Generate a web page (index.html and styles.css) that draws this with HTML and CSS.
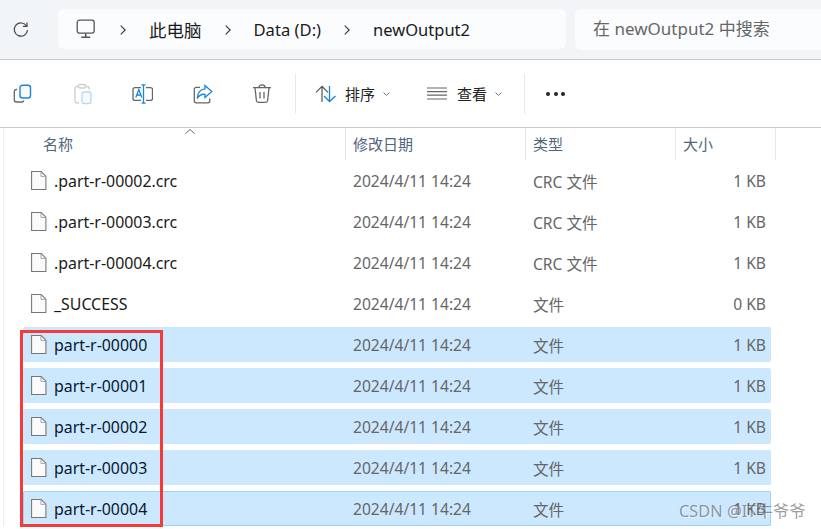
FILE: index.html
```html
<!DOCTYPE html>
<html lang="zh-CN">
<head>
<meta charset="utf-8">
<title>newOutput2</title>
<link rel="stylesheet" href="styles.css">
</head>
<body>
<div class="window">
  <header class="addressbar">
    <svg class="refresh" width="18" height="18" viewBox="0 0 18 18" fill="none" stroke="#444" stroke-width="1.2"><path d="M14.6 6.2A6.6 6.6 0 1 0 15.5 10"/><path d="M15 2.4v4h-4"/></svg>
    <nav class="crumbs">
      <svg class="pc" width="20" height="20" viewBox="0 0 20 20" fill="none" stroke="#555" stroke-width="1.3"><rect x="1.2" y="1.2" width="17" height="13" rx="2.4"/><path d="M9.700 14.500v3.600M5.200 18.200h9" stroke-width="1.6"/></svg>
      <svg class="chev" width="6" height="10" viewBox="0 0 6 10" fill="none" stroke="#333" stroke-width="1.1"><path d="M.7.7 5.2 5 .7 9.3"/></svg>
      <span class="crumb c1">此电脑</span>
      <svg class="chev" width="6" height="10" viewBox="0 0 6 10" fill="none" stroke="#333" stroke-width="1.1"><path d="M.7.7 5.2 5 .7 9.3"/></svg>
      <span class="crumb c2">Data (D:)</span>
      <svg class="chev" width="6" height="10" viewBox="0 0 6 10" fill="none" stroke="#333" stroke-width="1.1"><path d="M.7.7 5.2 5 .7 9.3"/></svg>
      <span class="crumb">newOutput2</span>
    </nav>
    <div class="search">在 newOutput2 中搜索</div>
  </header>

  <section class="toolbar">
    <div class="tools">
      <svg width="20" height="20" viewBox="0 0 20 20" fill="none"><path d="M4 5.500H3.200A2 2 0 0 0 1.300 7.500v8.500a2 2 0 0 0 2 2h5.500a2 2 0 0 0 2-1.500" stroke="#666" stroke-width="1.300"/><rect x="7" y="1.200" width="10.500" height="12.800" rx="2.500" fill="#fafafa" stroke="#1a86d9" stroke-width="1.400"/></svg>
      <svg width="20" height="22" viewBox="0 0 20 22" fill="none"><path d="M12 3.500h2a2 2 0 0 1 2 2v1M6 20H4a2 2 0 0 1-2-2V5.500a2 2 0 0 1 2-2h2" stroke="#ccc" stroke-width="1.300"/><rect x="5.500" y="1.500" width="7" height="3.500" rx="1.500" stroke="#ccc" stroke-width="1.300"/><rect x="9" y="9" width="9" height="11.500" rx="1.800" fill="#f8fbfe" stroke="#b6d8f3" stroke-width="1.300"/></svg>
      <svg width="21" height="20" viewBox="0 0 21 20" fill="none"><path d="M9 3.600H3a2 2 0 0 0-2 2v8.800a2 2 0 0 0 2 2h6M14 3.600h4.500a2 2 0 0 1 2 2v8.800a2 2 0 0 1-2 2H14" stroke="#666" stroke-width="1.300"/><path d="M11.500.8v18.400M9.500.8h4M9.500 19.200h4" stroke="#1a86d9" stroke-width="1.300"/><path d="m3.800 13.600 3-8 3 8M4.800 11h4" stroke="#1a86d9" stroke-width="1.300"/></svg>
      <svg width="20" height="20" viewBox="0 0 20 20" fill="none"><path d="M7 3.300H3.300a2 2 0 0 0-2 2v11.500a2 2 0 0 0 2 2h11.500a2 2 0 0 0 2-2v-2.300" stroke="#666" stroke-width="1.300"/><path d="M12 1.500 18.700 7.500 12 13.500V10.300C8.500 10 6 11.200 4.300 14.500 4.500 9.500 7 5.200 12 4.800Z" fill="#fff" stroke="#1a86d9" stroke-width="1.300"/></svg>
      <svg width="20" height="21" viewBox="0 0 20 21" fill="none" stroke="#666" stroke-width="1.300"><path d="M1 4.700h18M7 4.500C7 1 13 1 13 4.500"/><path d="M3 5l1.400 12.500a2 2 0 0 0 2 1.800h7.200a2 2 0 0 0 2-1.800L17 5"/><path d="M8 9v6.500M12 9v6.500"/></svg>
    </div>
    <span class="sep"></span>
    <div class="menu sort">
      <svg width="22" height="18" viewBox="0 0 22 18" fill="none"><path d="M7 17V1.500M1 7.300 7 1.300l6 6" stroke="#555" stroke-width="1.200"/><path d="M14.500 1v15.500M9 11l5.500 5.500L20.500 11" stroke="#1a86d9" stroke-width="1.300"/></svg>
      <span class="menu-label">排序</span>
      <svg class="caret" width="7" height="4" viewBox="0 0 7 4" fill="none" stroke="#777"><path d="m.5.500 3 3 3-3"/></svg>
    </div>
    <div class="menu view">
      <svg width="20" height="13" viewBox="0 0 20 13" fill="none" stroke="#666" stroke-width="1.200"><path d="M0 1h20M0 4.600h20M0 8.200h20M0 12h20"/></svg>
      <span class="menu-label view-label">查看</span>
      <svg class="caret" width="7" height="4" viewBox="0 0 7 4" fill="none" stroke="#777"><path d="m.5.500 3 3 3-3"/></svg>
    </div>
    <span class="sep sep-b"></span>
    <div class="more"><i></i><i></i><i></i></div>
  </section>

  <main class="list">
    <div class="head">
      <div class="hcell name">名称<svg class="sort-up" width="10" height="5" viewBox="0 0 10 5" fill="none" stroke="#666"><path d="m.5 4.500 4.500-4 4.500 4"/></svg></div>
      <div class="hcell">修改日期</div>
      <div class="hcell">类型</div>
      <div class="hcell">大小</div>
    </div>
    <div class="rows">
      <div class="row"><div class="fname"><svg class="file" viewBox="0 0 16 20" preserveAspectRatio="none"><use href="#doc"/></svg>.part-r-00002.crc</div><div>2024/4/11 14:24</div><div>CRC 文件</div><div class="size">1 KB</div></div>
      <div class="row"><div class="fname"><svg class="file" viewBox="0 0 16 20" preserveAspectRatio="none"><use href="#doc"/></svg>.part-r-00003.crc</div><div>2024/4/11 14:24</div><div>CRC 文件</div><div class="size">1 KB</div></div>
      <div class="row"><div class="fname"><svg class="file" viewBox="0 0 16 20" preserveAspectRatio="none"><use href="#doc"/></svg>.part-r-00004.crc</div><div>2024/4/11 14:24</div><div>CRC 文件</div><div class="size">1 KB</div></div>
      <div class="row"><div class="fname"><svg class="file" viewBox="0 0 16 20" preserveAspectRatio="none"><use href="#doc"/></svg>_SUCCESS</div><div>2024/4/11 14:24</div><div>文件</div><div class="size">0 KB</div></div>
      <div class="row sel"><div class="fname"><svg class="file" viewBox="0 0 16 20" preserveAspectRatio="none"><use href="#doc"/></svg>part-r-00000</div><div>2024/4/11 14:24</div><div>文件</div><div class="size">1 KB</div></div>
      <div class="row sel"><div class="fname"><svg class="file" viewBox="0 0 16 20" preserveAspectRatio="none"><use href="#doc"/></svg>part-r-00001</div><div>2024/4/11 14:24</div><div>文件</div><div class="size">1 KB</div></div>
      <div class="row sel"><div class="fname"><svg class="file" viewBox="0 0 16 20" preserveAspectRatio="none"><use href="#doc"/></svg>part-r-00002</div><div>2024/4/11 14:24</div><div>文件</div><div class="size">1 KB</div></div>
      <div class="row sel"><div class="fname"><svg class="file" viewBox="0 0 16 20" preserveAspectRatio="none"><use href="#doc"/></svg>part-r-00003</div><div>2024/4/11 14:24</div><div>文件</div><div class="size">1 KB</div></div>
      <div class="row sel focus"><div class="fname"><svg class="file" viewBox="0 0 16 20" preserveAspectRatio="none"><use href="#doc"/></svg>part-r-00004</div><div>2024/4/11 14:24</div><div>文件</div><div class="size">1 KB</div></div>
    </div>
  </main>

  <div class="redbox"></div>
  <div class="watermark">CSDN @IT牛爷爷</div>
</div>
<svg class="defs" width="0" height="0"><defs><g id="doc"><path d="M.6.600H10.500L15.400 5.500V19.400H.6Z" fill="#fafafa" stroke="#777" stroke-width="1.100"/><path d="M10.300.8V5.700H15.200" fill="none" stroke="#999" stroke-width=".9"/></g></defs></svg>
</body>
</html>
```
FILE: styles.css
```css
* { box-sizing: border-box; }
html, body { margin: 0; padding: 0; }
body {
  width: 821px;
  height: 529px;
  overflow: hidden;
  background: #fff;
  font-family: "Noto Sans", "Noto Sans CJK SC", sans-serif;
  color: #1a1a1a;
}
.window { position: relative; width: 821px; height: 529px; overflow: hidden; }
.defs { position: absolute; }

.addressbar {
  height: 60px;
  display: flex;
  align-items: flex-start;
  padding: 9px 0 0 12px;
  background: #f2f5f8;
  border-bottom: 1px solid #c5cbd2;
}
.refresh { margin: 11px 28px 0 0; flex: none; }
.crumbs {
  width: 508px;
  height: 40px;
  flex: none;
  display: flex;
  align-items: center;
  padding-left: 18px;
  background: #fbfcfe;
  border-radius: 6px;
  font-size: 16.500px;
}
.pc { margin-right: 24px; flex: none; }
.chev { flex: none; margin-top: 1px; }
.crumb { margin-left: 23px; margin-right: 23px; white-space: nowrap; }
.c1 { margin-left: 23px; margin-right: 23px; font-size: 17.500px; }
.c2 { font-size: 16.600px; }
.search {
  width: 246px;
  height: 41px;
  margin-left: 9px;
  padding-left: 18px;
  line-height: 40px;
  background: #fbfcfe;
  border-radius: 6px 0 0 6px;
  font-size: 17px;
  color: #666;
  white-space: nowrap;
}

.toolbar {
  height: 68px;
  display: flex;
  align-items: center;
  border-bottom: 1px solid #c5cbd2;
  padding-left: 13px;
}
.tools { display: flex; align-items: center; gap: 39.500px; width: 282px; flex: none; }
.sep { width: 1px; height: 40px; background: #e6e8ea; flex: none; }
.menu { display: flex; align-items: center; flex: none; }
.menu-label { font-size: 15px; margin-left: 8px; margin-right: 8px; color: #222; }
.view-label { margin-left: 10px; }
.sort { margin-left: 19px; }
.view { margin-left: 37px; }
.sep-b { margin-left: 22px; }
.more { margin-left: 21px; display: flex; gap: 3.500px; }
.more i { width: 4px; height: 4px; border-radius: 50%; background: #222; }

.list { border-left: 1px solid #eee; margin-left: 3px; }
.head {
  display: grid;
  grid-template-columns: 342px 180px 150px 100px;
  height: 32px;
}
.hcell {
  position: relative;
  padding-left: 7px;
  line-height: 32px;
  font-size: 15px;
  color: #51657c;
  border-right: 1px solid #e4e6e8;
}
.name { padding-left: 39px; }
.sort-up { position: absolute; left: 181px; top: 1px; }
.rows { display: flex; flex-direction: column; gap: 6px; padding: 3px 0 0 19px; }
.row {
  width: 748px;
  height: 35px;
  padding-top: 1px;
  display: grid;
  grid-template-columns: 323px 180px 150px 90px;
  align-items: center;
  border-radius: 2px;
  font-size: 15.600px;
  color: #666;
  white-space: nowrap;
}
.fname { display: flex; align-items: center; color: #1a1a1a; font-size: 15.900px; }
.file { width: 15.500px; height: 19px; margin: -1px 7.500px 0 8px; flex: none; }
.row > div:nth-child(2) { padding-left: 7px; }
.row > div:nth-child(3) { padding-left: 7px; }
.size { text-align: right; }
.sel { background: #cce8ff; }
.sel .fname { color: #0a1730; }
.focus { box-shadow: inset 0 0 0 1px #99d1ff; }

.redbox {
  position: absolute;
  left: 20px;
  top: 330px;
  width: 143px;
  height: 197px;
  border: 3px solid #f53a3a;
}
.watermark {
  position: absolute;
  left: 679px;
  top: 498px;
  font-size: 16.400px;
  color: rgba(90, 90, 90, .6);
  text-shadow: 1px 1px 0 rgba(255, 255, 255, .45);
  white-space: nowrap;
}
```
